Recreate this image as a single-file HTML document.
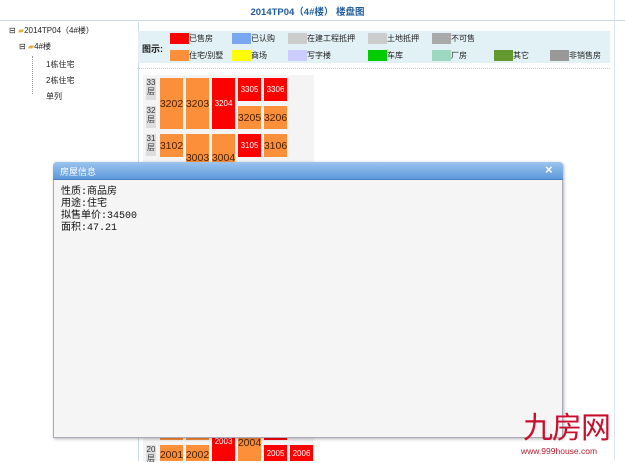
<!DOCTYPE html>
<html><head><meta charset="utf-8"><style>
*{margin:0;padding:0;box-sizing:border-box}
body{width:625px;height:461px;overflow:hidden;background:#fff;font-family:"Liberation Sans","Noto Sans CJK SC",sans-serif;font-size:9px;position:relative;color:#222}
.a{position:absolute}
.c{position:absolute;font-size:10.5px;color:#4a2000;display:flex;align-items:center;justify-content:center}
.o{background:#fb8f3a}.r{background:#f00;color:#fff;font-size:8px}
.lg{position:absolute;width:19px;height:11px}
.lt{position:absolute;font-size:8px}
.fl{position:absolute;left:146px;width:10px;background:#ddd;font-size:8px;line-height:9px;text-align:center;color:#333}
</style></head><body>
<div class="a" style="left:0;top:0;width:625px;height:21px;border-bottom:1px solid #c9dbe8"></div>
<div class="a" style="left:0;top:4px;width:615px;text-align:center;font-size:9.5px;font-weight:bold;color:#1f5c99">2014TP04（4#楼） 楼盘图</div>
<div class="a" style="left:138px;top:22px;width:1px;height:439px;background:#c9dbe8"></div>
<div class="a" style="left:614px;top:0;width:1px;height:461px;background:#dde6ee"></div>
<div class="a" style="left:9px;top:25px;font-size:8px">⊟ <span style="color:#e0b040">▰</span>2014TP04（4#楼）</div>
<div class="a" style="left:19px;top:41px;font-size:8px">⊟ <span style="color:#e0b040">▰</span>4#楼</div>
<div class="a" style="left:32px;top:56px;width:1px;height:38px;border-left:1px dotted #999"></div>
<div class="a" style="left:46px;top:59px;font-size:8px">1栋住宅</div>
<div class="a" style="left:46px;top:75px;font-size:8px">2栋住宅</div>
<div class="a" style="left:46px;top:91px;font-size:8px">单列</div>
<div class="a" style="left:138px;top:31px;width:472px;height:32px;background:#e2f1f5"></div>
<div class="a" style="left:142px;top:42px;font-size:9px;font-weight:bold">图示:</div>
<div class="lg" style="left:170px;top:33px;background:#f00"></div><div class="lt" style="left:189px;top:33px">已售房</div>
<div class="lg" style="left:232px;top:33px;background:#7aa8f0"></div><div class="lt" style="left:251px;top:33px">已认购</div>
<div class="lg" style="left:288px;top:33px;background:#ccc"></div><div class="lt" style="left:307px;top:33px">在建工程抵押</div>
<div class="lg" style="left:368px;top:33px;background:#ccc"></div><div class="lt" style="left:387px;top:33px">土地抵押</div>
<div class="lg" style="left:432px;top:33px;background:#aaa"></div><div class="lt" style="left:451px;top:33px">不可售</div>
<div class="lg" style="left:170px;top:50px;background:#fb8f3a"></div><div class="lt" style="left:189px;top:50px">住宅/别墅</div>
<div class="lg" style="left:232px;top:50px;background:#ff0"></div><div class="lt" style="left:251px;top:50px">商场</div>
<div class="lg" style="left:288px;top:50px;background:#ccf"></div><div class="lt" style="left:307px;top:50px">写字楼</div>
<div class="lg" style="left:368px;top:50px;background:#0c0"></div><div class="lt" style="left:387px;top:50px">车库</div>
<div class="lg" style="left:432px;top:50px;background:#9dd9c0"></div><div class="lt" style="left:451px;top:50px">厂房</div>
<div class="lg" style="left:494px;top:50px;background:#63992f"></div><div class="lt" style="left:513px;top:50px">其它</div>
<div class="lg" style="left:550px;top:50px;background:#999"></div><div class="lt" style="left:569px;top:50px">非销售房</div>
<div class="a" style="left:138px;top:68px;width:472px;border-top:1px dotted #ccc"></div>
<div class="a" style="left:143px;top:75px;width:171px;height:90px;background:#f4f4f4"></div>
<div class="fl" style="top:78px;height:22px">33<br>层</div>
<div class="fl" style="top:106px;height:22px">32<br>层</div>
<div class="fl" style="top:134px;height:22px">31<br>层</div>
<div class="c o" style="left:160px;top:78px;width:23px;height:51px">3202</div>
<div class="c o" style="left:186px;top:78px;width:23px;height:51px">3203</div>
<div class="c r" style="left:212px;top:78px;width:23px;height:51px">3204</div>
<div class="c r" style="left:238px;top:78px;width:23px;height:23px">3305</div>
<div class="c r" style="left:264px;top:78px;width:23px;height:23px">3306</div>
<div class="c o" style="left:238px;top:106px;width:23px;height:23px">3205</div>
<div class="c o" style="left:264px;top:106px;width:23px;height:23px">3206</div>
<div class="c o" style="left:160px;top:134px;width:23px;height:23px">3102</div>
<div class="c o" style="left:186px;top:134px;width:23px;height:30px;align-items:flex-end">3003</div>
<div class="c o" style="left:212px;top:134px;width:23px;height:30px;align-items:flex-end">3004</div>
<div class="c r" style="left:238px;top:134px;width:23px;height:23px">3105</div>
<div class="c o" style="left:264px;top:134px;width:23px;height:23px">3106</div>
<div class="a" style="left:143px;top:430px;width:171px;height:31px;background:#f4f4f4"></div>
<div class="fl" style="top:445px;height:16px">20<br>层</div>
<div class="c o" style="left:160px;top:432px;width:23px;height:8px"></div>
<div class="c o" style="left:186px;top:432px;width:23px;height:8px"></div>
<div class="c o" style="left:160px;top:445px;width:23px;height:16px;align-items:flex-end">2001</div>
<div class="c o" style="left:186px;top:445px;width:23px;height:16px;align-items:flex-end">2002</div>
<div class="c r" style="left:212px;top:432px;width:23px;height:29px;align-items:flex-start;padding-top:5px">2003</div>
<div class="c o" style="left:238px;top:432px;width:23px;height:29px;align-items:flex-start;padding-top:5px">2004</div>
<div class="c r" style="left:264px;top:432px;width:23px;height:8px"></div>
<div class="c r" style="left:264px;top:445px;width:23px;height:16px">2005</div>
<div class="c r" style="left:290px;top:445px;width:23px;height:16px">2006</div>
<div class="a" style="left:53px;top:162px;width:510px;height:276px;background:#f5f5f5;border:1px solid #aab;box-shadow:1px 1px 3px rgba(0,0,0,.3);border-radius:4px 4px 0 0"></div>
<div class="a" style="left:53px;top:162px;width:510px;height:18px;background:linear-gradient(#9cc4ee,#5d98da);border-radius:4px 4px 0 0;border-bottom:1px solid #4a80c0"></div>
<div class="a" style="left:60px;top:165px;color:#fff;font-size:9px">房屋信息</div>
<div class="a" style="left:545px;top:162px;color:#fff;font-size:13px;font-weight:bold">×</div>
<div class="a" style="left:61px;top:187px;font-size:10px;line-height:12px;color:#111;font-family:'Liberation Mono','Noto Sans CJK SC',monospace">性质:商品房<br>用途:住宅<br>拟售单价:34500<br>面积:47.21</div>
<div class="a" style="left:523px;top:413px;font-size:30px;line-height:32px;color:#c8102e;letter-spacing:-1px">九房网</div>
<div class="a" style="left:521px;top:446px;font-size:8.5px;color:#b02030">www.999house.com</div>
</body></html>
